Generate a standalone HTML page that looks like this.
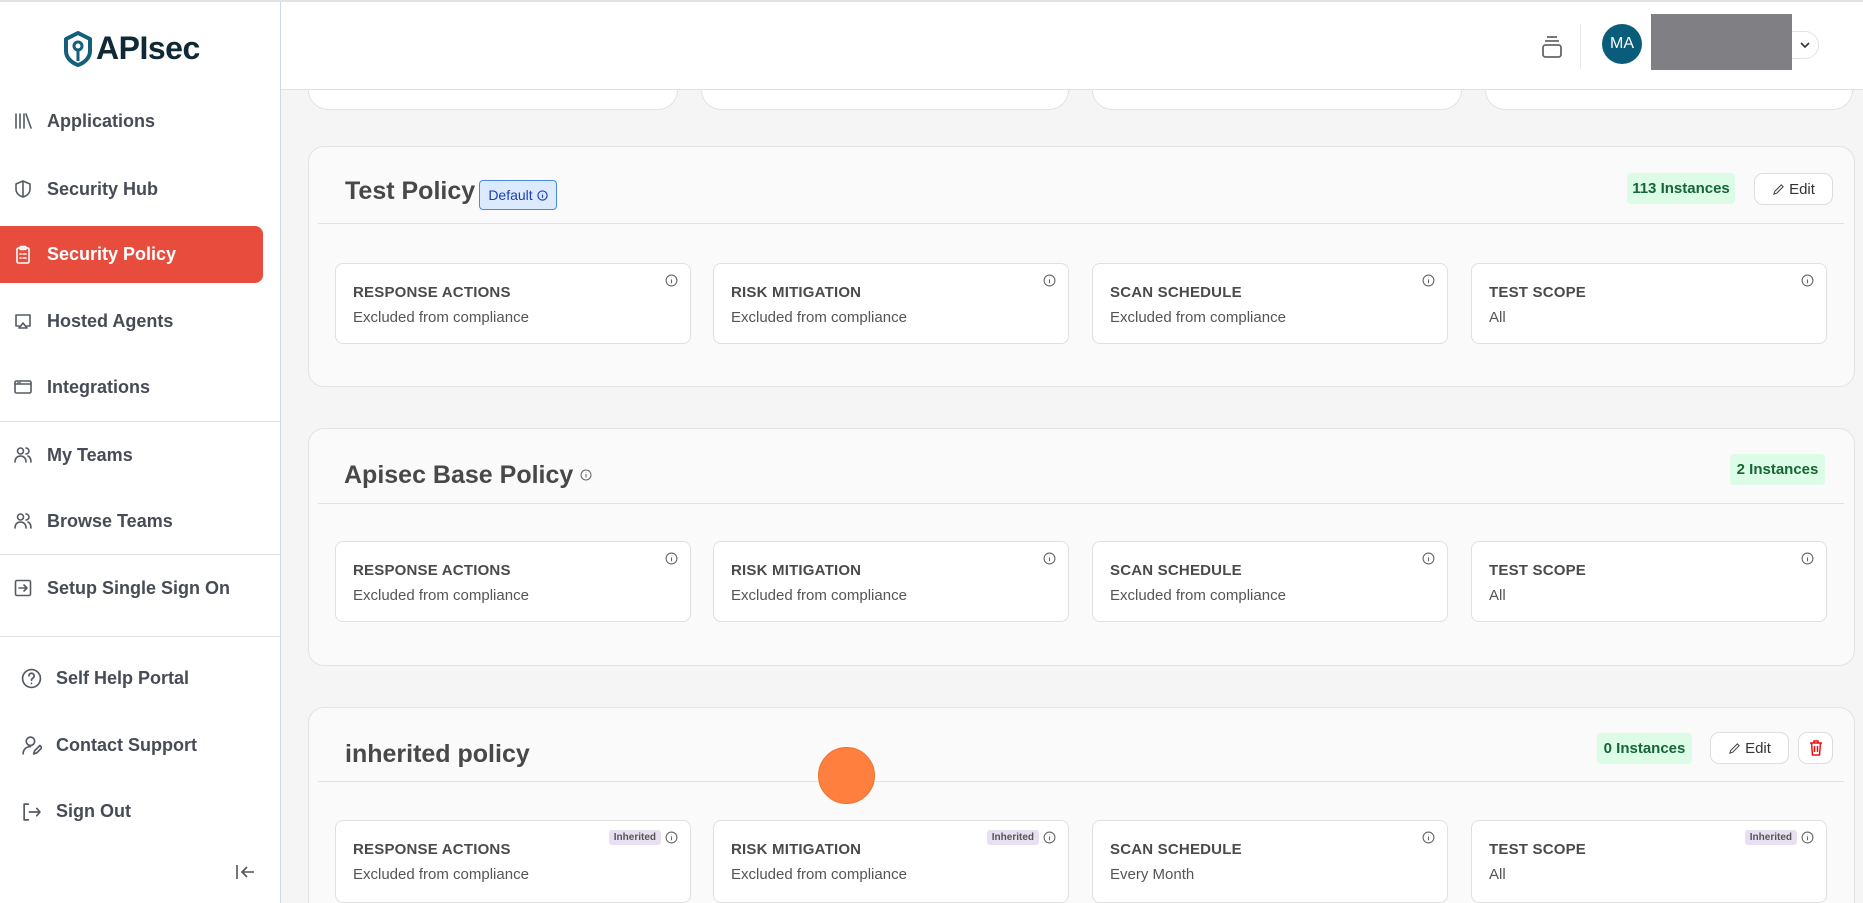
<!DOCTYPE html>
<html><head><meta charset="utf-8">
<style>
*{box-sizing:border-box;margin:0;padding:0}
html{width:1863px;height:903px;overflow:hidden}
body{width:1863px;height:903px;overflow:hidden;background:#f5f5f5;font-family:"Liberation Sans",Arial,sans-serif;position:relative}
.abs{position:absolute}
#topline{left:0;top:0;width:1863px;height:2px;background:#e2e2e2}
#side{left:0;top:2px;width:281px;height:901px;background:#fff;border-right:1.5px solid #cfd8e3}
#hdr{left:281px;top:2px;width:1582px;height:88px;background:#fff;border-bottom:1px solid #e2e2e2;z-index:2}
.nav{position:absolute;left:0;width:263px;height:40px;display:flex;align-items:center;font-size:18px;font-weight:bold;color:#474b55}
.nav svg{position:absolute;left:13px;width:20px;height:20px;fill:none;stroke:#555a63;stroke-width:1.6;stroke-linecap:round;stroke-linejoin:round}
.nav span{position:absolute;left:47px}
.nav.b svg{left:21px;width:21px;height:21px}
.nav.b span{left:56px}
.nav.act{background:#e84c3d;color:#fff;border-radius:0 8px 8px 0;height:57px}
.nav.act svg{stroke:#fff}
.div{position:absolute;left:0;width:280px;height:1px;background:#dcdfe4}
.pol{position:absolute;left:308px;width:1547px;background:#fafafa;border:1px solid #e3e3e3;border-radius:16px}
.pol .ttl{position:absolute;left:36px;font-size:25px;font-weight:bold;color:#484848}
.pol .hr{position:absolute;left:9px;right:10px;height:1px;background:#e2e2e2}
.ic{position:absolute;width:356px;height:81px;background:#fff;border:1px solid #e0e0e0;border-radius:8px}
.ic .l{position:absolute;left:17px;top:20px;font-size:15px;font-weight:bold;color:#4a4a4a;letter-spacing:.2px}
.ic .v{position:absolute;left:17px;top:45px;font-size:15px;color:#555}
.ic .i{position:absolute;right:12px;top:10px;width:13px;height:13px}
.ic .inh{position:absolute;right:29px;top:9px;background:#e6e0f0;color:#555;font-size:10px;font-weight:bold;padding:2px 5px;border-radius:3px}
.badge{position:absolute;height:31px;background:#dcfce7;color:#166534;font-weight:bold;font-size:15px;border-radius:4px;display:flex;align-items:center;justify-content:center}
.btn{position:absolute;height:32px;border:1px solid #ddd;border-radius:9px;background:#fff;display:flex;align-items:center;justify-content:center;font-size:15px;color:#333;gap:4px}
</style></head><body>
<div id="topline" class="abs"></div>
<div id="side" class="abs">
  <div class="abs" style="left:63px;top:28px;display:flex;align-items:center">
    <svg width="30" height="36" viewBox="0 0 30 36"><path d="M15 2 L27 8 V20 C27 27 21 32 15 34 C9 32 3 27 3 20 V8 Z" fill="none" stroke="#14607a" stroke-width="4" stroke-linejoin="round"/><circle cx="15" cy="15" r="4" fill="none" stroke="#14607a" stroke-width="3"/><path d="M15 19 V30" stroke="#14607a" stroke-width="3"/></svg>
    <span style="font-size:32px;font-weight:bold;color:#0f2a36;margin-left:3px;letter-spacing:-0.5px">APIsec</span>
  </div>
  <div class="nav" style="top:99px"><svg viewBox="0 0 20 20"><path d="M3 3v14M7 3v14M11 3v14M13 3l5 14"/></svg><span>Applications</span></div>
  <div class="nav" style="top:167px"><svg viewBox="0 0 20 20"><path d="M10 2l7 3v5c0 4-3 7-7 8-4-1-7-4-7-8V5z M10 2v16"/></svg><span>Security Hub</span></div>
  <div class="nav act" style="top:224px"><svg viewBox="0 0 20 20"><rect x="4" y="3" width="12" height="15" rx="1.5"/><rect x="7" y="1.5" width="6" height="3" rx="1"/><path d="M7 9h1M10 9h3M7 13h1M10 13h3"/></svg><span>Security Policy</span></div>
  <div class="nav" style="top:299px"><svg viewBox="0 0 20 20"><path d="M6 15H3V4h14v11h-3M10 12l-4 5h8z"/></svg><span>Hosted Agents</span></div>
  <div class="nav" style="top:365px"><svg viewBox="0 0 20 20"><rect x="2" y="4" width="16" height="12" rx="1.5"/><path d="M2 7h16M5 5.5h0M7 5.5h0"/></svg><span>Integrations</span></div>
  <div class="div" style="top:419px"></div>
  <div class="nav" style="top:433px"><svg viewBox="0 0 20 20"><circle cx="7.5" cy="6" r="3"/><path d="M2 17c0-4 2.5-6 5.5-6s5.5 2 5.5 6M13 3a3 3 0 010 6M15 11c2 1 3 3 3 6"/></svg><span>My Teams</span></div>
  <div class="nav" style="top:499px"><svg viewBox="0 0 20 20"><circle cx="7.5" cy="6" r="3"/><path d="M2 17c0-4 2.5-6 5.5-6s5.5 2 5.5 6M13 3a3 3 0 010 6M15 11c2 1 3 3 3 6"/></svg><span>Browse Teams</span></div>
  <div class="div" style="top:552px"></div>
  <div class="nav" style="top:566px"><svg viewBox="0 0 20 20"><rect x="2.5" y="2.5" width="15" height="15" rx="1.5"/><path d="M6 10h8M11 7l3 3-3 3"/></svg><span>Setup Single Sign On</span></div>
  <div class="div" style="top:634px"></div>
  <div class="nav b" style="top:656px"><svg viewBox="0 0 20 20"><circle cx="10" cy="10" r="8.5"/><path d="M7.5 7.5a2.5 2.5 0 114 2c-1 .6-1.5 1-1.5 2.2M10 14.5v.3"/></svg><span>Self Help Portal</span></div>
  <div class="nav b" style="top:723px"><svg viewBox="0 0 20 20"><circle cx="9" cy="6" r="4"/><path d="M2 18c0-4 3-7 7-7M12 18l1-3 5-5 2 2-5 5z"/></svg><span>Contact Support</span></div>
  <div class="nav b" style="top:789px"><svg viewBox="0 0 20 20"><path d="M7 3H3v15h4M8 10.5h10M15 7l3 3.5-3 3.5"/></svg><span>Sign Out</span></div>
  <svg class="abs" style="left:235px;top:861px" width="20" height="18" viewBox="0 0 20 18"><path d="M2 2v14M19 9H7M12 4L7 9l5 5" fill="none" stroke="#555" stroke-width="1.6"/></svg>
</div>
<div id="hdr" class="abs">
  <svg class="abs" style="left:1260px;top:33px" width="22" height="24" viewBox="0 0 22 24"><path d="M6 2h10M4 6h14" stroke="#666" stroke-width="1.8" fill="none"/><rect x="2" y="10" width="18" height="12" rx="2.5" fill="none" stroke="#666" stroke-width="1.8"/></svg>
  <div class="abs" style="left:1299px;top:22px;width:1px;height:45px;background:#e3e6ea"></div>
  <div class="abs" style="left:1321px;top:22px;width:40px;height:40px;border-radius:50%;background:#0a5d7a;color:#fff;font-size:16px;display:flex;align-items:center;justify-content:center">MA</div>
  <div class="abs" style="left:1370px;top:12px;width:141px;height:56px;background:#808084"></div>
  <div class="abs" style="left:1511px;top:29px;width:27px;height:28px;border:1px solid #e2e2e2;border-left:none;border-radius:0 14px 14px 0;display:flex;align-items:center;justify-content:center"><svg width="12" height="8" viewBox="0 0 12 8"><path d="M2 2l4 4 4-4" fill="none" stroke="#333" stroke-width="1.6"/></svg></div>
</div>
<div class="abs" style="left:308px;top:70px;width:370px;height:40px;background:#fff;border:1px solid #e2e2e2;border-radius:0 0 20px 20px"></div>
<div class="abs" style="left:701px;top:70px;width:368px;height:40px;background:#fff;border:1px solid #e2e2e2;border-radius:0 0 20px 20px"></div>
<div class="abs" style="left:1092px;top:70px;width:370px;height:40px;background:#fff;border:1px solid #e2e2e2;border-radius:0 0 20px 20px"></div>
<div class="abs" style="left:1485px;top:70px;width:368px;height:40px;background:#fff;border:1px solid #e2e2e2;border-radius:0 0 20px 20px"></div>

<div class="pol" style="top:146px;height:241px">
  <div class="ttl" style="top:30px">Test Policy</div>
  <div class="abs" style="left:170px;top:33px;width:78px;height:30px;background:#dbeafe;border:1px solid #4a8ae0;border-radius:4px;color:#1d3fb0;font-size:14px;display:flex;align-items:center;justify-content:center;gap:4px">Default <svg width="11" height="11" viewBox="0 0 12 12"><circle cx="6" cy="6" r="5" fill="none" stroke="#1d3fb0" stroke-width="1.3"/><path d="M6 5v3.5M6 3.3v.3" stroke="#1d3fb0" stroke-width="1.3"/></svg></div>
  <div class="badge" style="left:1318px;top:26px;width:108px">113 Instances</div>
  <div class="btn" style="left:1445px;top:26px;width:79px"><svg width="13" height="13" viewBox="0 0 14 14"><path d="M2 12l1-3 7-7 2 2-7 7z" fill="none" stroke="#444" stroke-width="1.1"/></svg>Edit</div>
  <div class="hr" style="top:76px"></div>
</div>
<div class="pol" style="top:428px;height:238px">
  <div class="ttl" style="top:32px;left:35px">Apisec Base Policy <svg width="12" height="12" viewBox="0 0 12 12" style="vertical-align:2px"><circle cx="6" cy="6" r="5" fill="none" stroke="#666" stroke-width="1"/><path d="M6 5v3.5M6 3.3v.3" stroke="#666" stroke-width="1"/></svg></div>
  <div class="badge" style="left:1421px;top:25px;width:95px">2 Instances</div>
  <div class="hr" style="top:74px"></div>
</div>
<div class="pol" style="top:707px;height:196px;border-bottom:none;border-radius:16px 16px 0 0">
  <div class="ttl" style="top:32px">inherited policy</div>
  <div class="badge" style="left:1288px;top:25px;width:95px">0 Instances</div>
  <div class="btn" style="left:1401px;top:24px;width:79px"><svg width="13" height="13" viewBox="0 0 14 14"><path d="M2 12l1-3 7-7 2 2-7 7z" fill="none" stroke="#444" stroke-width="1.1"/></svg>Edit</div>
  <div class="btn" style="left:1489px;top:24px;width:35px"><svg width="14" height="16" viewBox="0 0 14 16"><path d="M1 3h12M5 3V1h4v2M2.5 3l1 12h7l1-12M5.5 6v6M8.5 6v6" fill="none" stroke="#e11" stroke-width="1.5"/></svg></div>
  <div class="hr" style="top:73px"></div>
</div>

<div id="cards"></div>
<div class="abs" style="left:818px;top:747px;width:57px;height:57px;border-radius:50%;background:#ff7f3e;border:1px solid #f07030;z-index:5"></div>
<script>
var xs=[335,713,1092,1471],tops=[263,541,820];
var labs=["RESPONSE ACTIONS","RISK MITIGATION","SCAN SCHEDULE","TEST SCOPE"];
var vals=[["Excluded from compliance","Excluded from compliance","Excluded from compliance","All"],["Excluded from compliance","Excluded from compliance","Excluded from compliance","All"],["Excluded from compliance","Excluded from compliance","Every Month","All"]];
var inh=[[0,0,0,0],[0,0,0,0],[1,1,0,1]];
var info='<svg class="i" viewBox="0 0 12 12"><circle cx="6" cy="6" r="5" fill="none" stroke="#666" stroke-width="1"/><path d="M6 5v3.5M6 3.3v.3" stroke="#666" stroke-width="1"/></svg>';
var h='';
for(var r=0;r<3;r++)for(var c=0;c<4;c++){
var ht=(r==2)?'height:83px;':'';
h+='<div class="ic" style="left:'+xs[c]+'px;top:'+tops[r]+'px;'+ht+'">'+(inh[r][c]?'<div class="inh">Inherited</div>':'')+info+'<div class="l">'+labs[c]+'</div><div class="v">'+vals[r][c]+'</div></div>';}
document.getElementById('cards').innerHTML=h;
</script>
</body></html>
